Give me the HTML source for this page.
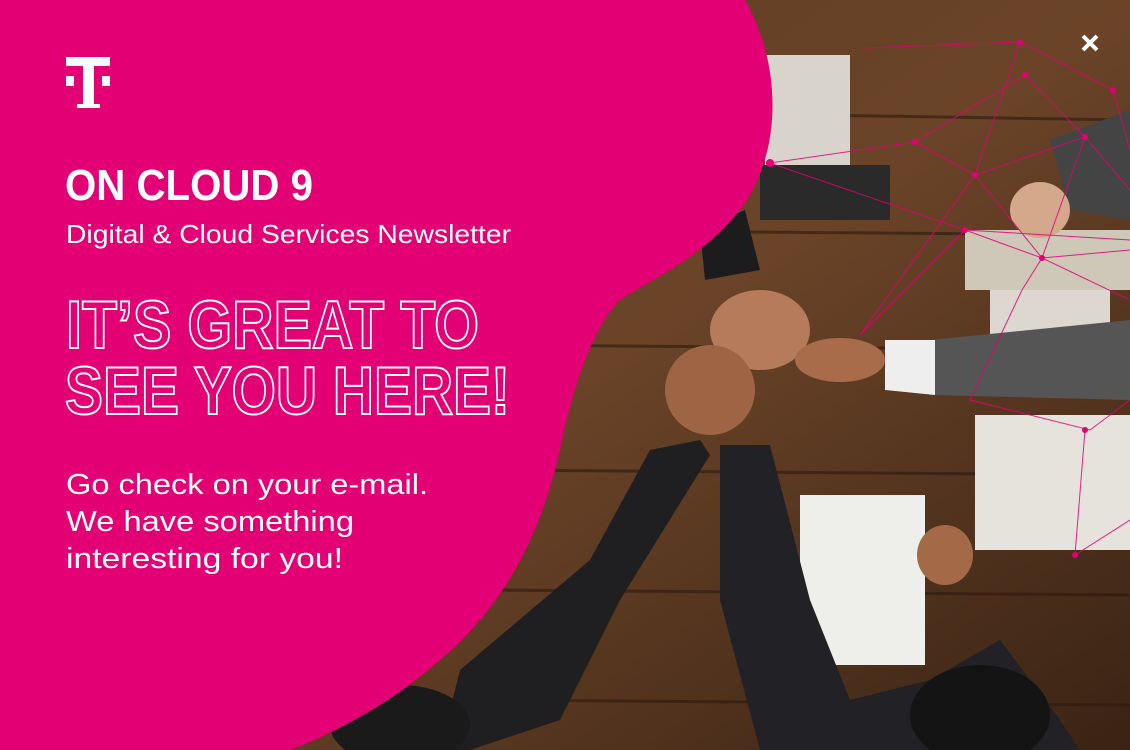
<!DOCTYPE html>
<html><head><meta charset="utf-8"><style>
html,body{margin:0;padding:0;width:1130px;height:750px;overflow:hidden;background:#3e2616}
svg{display:block}
</style></head><body>
<svg width="1130" height="750" viewBox="0 0 1130 750" xmlns="http://www.w3.org/2000/svg">
<defs>
<linearGradient id="wood" x1="0" y1="0" x2="1" y2="1">
<stop offset="0" stop-color="#5a3a22"/><stop offset="0.5" stop-color="#6b4428"/><stop offset="1" stop-color="#3a2314"/>
</linearGradient>
</defs>
<rect width="1130" height="750" fill="url(#wood)"/>
<g stroke="#2e1a0e" stroke-width="3" opacity="0.6">
<line x1="500" y1="110" x2="1130" y2="120"/><line x1="500" y1="230" x2="1130" y2="235"/>
<line x1="500" y1="345" x2="1130" y2="350"/><line x1="500" y1="470" x2="1130" y2="475"/>
<line x1="500" y1="590" x2="1130" y2="595"/><line x1="500" y1="700" x2="1130" y2="705"/>
</g>
<!-- papers -->
<rect x="765" y="55" width="85" height="110" fill="#d8d4cc"/>
<rect x="760" y="165" width="130" height="55" fill="#2a2a2a"/>
<rect x="800" y="495" width="125" height="170" fill="#eeeeea"/>
<rect x="975" y="415" width="155" height="135" fill="#e6e2dc"/>
<rect x="965" y="230" width="165" height="60" fill="#cfc7b8"/>
<rect x="990" y="290" width="120" height="45" fill="#ddd8cf"/>
<!-- suits -->
<path d="M930 340 L1130 320 L1130 400 L930 395Z" fill="#555"/>
<path d="M885 340 L935 340 L935 395 L885 390Z" fill="#eee"/>
<path d="M700 440 L710 455 L620 600 L560 720 L470 750 L440 750 L460 670 L590 560 L650 450Z" fill="#1f1f22"/>
<path d="M720 445 L770 445 L810 600 L850 700 L930 680 L1000 640 L1060 720 L1080 750 L760 750 L720 600Z" fill="#222226"/>
<path d="M1050 140 L1130 110 L1130 220 L1070 210Z" fill="#444"/>
<path d="M700 230 L745 210 L760 270 L705 280Z" fill="#1c1c1e"/>
<ellipse cx="760" cy="330" rx="50" ry="40" fill="#b57b5a"/>
<ellipse cx="840" cy="360" rx="45" ry="22" fill="#a86c4a"/>
<ellipse cx="710" cy="390" rx="45" ry="45" fill="#9e6544"/>
<ellipse cx="1040" cy="210" rx="30" ry="28" fill="#d4a88a"/>
<ellipse cx="945" cy="555" rx="28" ry="30" fill="#a46a48"/>
<ellipse cx="980" cy="715" rx="70" ry="50" fill="#141414"/>
<ellipse cx="400" cy="725" rx="70" ry="40" fill="#1a1a1a"/>
<!-- network -->
<g stroke="#e20074" stroke-width="1" fill="none" opacity="0.85">
<polyline points="865,48 1020,42 1113,90 1130,150"/>
<polyline points="770,163 915,142 1025,75 1085,137 1130,190"/>
<polyline points="915,142 975,175 1042,258 1130,250"/>
<polyline points="860,335 965,230 1042,258 1022,290 970,400 1090,430 1130,400"/>
<polyline points="975,175 1085,137 1042,258 1130,300"/>
<polyline points="770,163 965,230 1130,240"/>
<polyline points="1085,430 1075,555 1130,520"/>
<polyline points="1020,42 975,175 860,335"/>
</g>
<g fill="#e20074"><circle cx="1020" cy="42" r="3"/><circle cx="1025" cy="75" r="3"/><circle cx="915" cy="142" r="3"/><circle cx="770" cy="163" r="4"/><circle cx="1085" cy="137" r="3"/><circle cx="1042" cy="258" r="3"/><circle cx="965" cy="230" r="3"/><circle cx="975" cy="175" r="3"/><circle cx="1113" cy="90" r="3"/><circle cx="1085" cy="430" r="3"/><circle cx="1075" cy="555" r="3"/></g>
<!-- pink blob -->
<path d="M0 0 L745 0 C780 60 785 150 740 210 C700 260 650 280 620 300 C590 330 570 400 560 450 C540 540 500 610 440 660 C390 705 330 735 290 750 L0 750Z" fill="#e20074"/>
<!-- logo -->
<g fill="#fff">
<rect x="66" y="57" width="44" height="9"/>
<rect x="83" y="57" width="11" height="50"/>
<rect x="77" y="104" width="23" height="4"/>
<rect x="66" y="76" width="8" height="10"/>
<rect x="102" y="76" width="8" height="10"/>
</g>
<path d="M1083 36 L1097 50 M1097 36 L1083 50" stroke="#fff" stroke-width="4"/>
<g font-family="Liberation Sans, sans-serif" fill="#fff">
<text x="65" y="200" font-size="44" font-weight="bold" textLength="248" lengthAdjust="spacingAndGlyphs">ON CLOUD 9</text>
<text x="66" y="243" font-size="26" textLength="445" lengthAdjust="spacingAndGlyphs">Digital &amp; Cloud Services Newsletter</text>
<text x="66" y="348" font-size="68" font-weight="bold" fill="none" stroke="#fff" stroke-width="2" textLength="413" lengthAdjust="spacingAndGlyphs">IT’S GREAT TO</text>
<text x="65" y="414" font-size="68" font-weight="bold" fill="none" stroke="#fff" stroke-width="2" textLength="445" lengthAdjust="spacingAndGlyphs">SEE YOU HERE!</text>
<text x="66" y="494" font-size="29" textLength="362" lengthAdjust="spacingAndGlyphs">Go check on your e-mail.</text>
<text x="66" y="531" font-size="29" textLength="288" lengthAdjust="spacingAndGlyphs">We have something</text>
<text x="66" y="568" font-size="29" textLength="277" lengthAdjust="spacingAndGlyphs">interesting for you!</text>
</g>
</svg>
</body></html>
